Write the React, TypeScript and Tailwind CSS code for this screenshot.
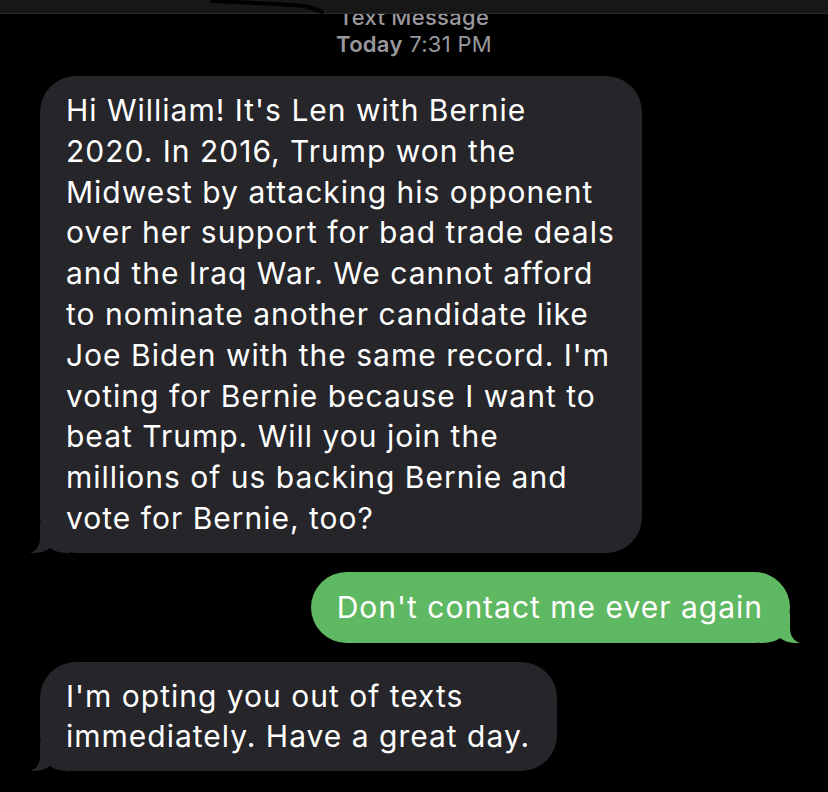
import React from 'react';

const font = { fontFamily: 'Inter, "Liberation Sans", sans-serif' };

type Side = 'left' | 'right';

const Tail: React.FC<{ side: Side; color: string }> = ({ side, color }) => (
  <svg
    width="40"
    height="30"
    viewBox="0 0 40 30"
    className={`absolute bottom-0 ${side === 'left' ? '-left-[10px]' : '-right-[10px] -scale-x-100'}`}
  >
    <path
      d="M10 0 L10 15 C10 23 6 28 0 30 C9 30.5 15 28.5 20 25 C24 28 30 30 40 30 L40 0 Z"
      fill={color}
    />
  </svg>
);

const Bubble: React.FC<{ side: Side; lines: string[] }> = ({ side, lines }) => {
  const isMe = side === 'right';
  const color = isMe ? '#5fb862' : '#262529';
  return (
    <div className={`flex ${isMe ? 'justify-end pr-[38px]' : 'justify-start pl-[40px]'}`}>
      <div
        className={`relative rounded-[36px] pl-[26px] pr-[27px] text-white text-[30px] leading-[40.8px] tracking-[1px] ${
          isMe ? 'bg-[#5fb862] py-[15px]' : 'bg-[#262529] py-[14px]'
        }`}
      >
        <Tail side={side} color={color} />
        <div className="relative">
          {lines.map((l, i) => (
            <div key={i} className="whitespace-nowrap">
              {l}
            </div>
          ))}
        </div>
      </div>
    </div>
  );
};

export default function App() {
  return (
    <div className="w-[828px] h-[792px] bg-black overflow-hidden" style={font}>
      {/* top bar */}
      <div className="relative z-10 h-[14px] bg-[#171717] border-b border-[#2c2c2c]">
        <svg width="828" height="16" className="absolute left-0 top-0">
          <path d="M212 1 C250 3 290 4 304 6 C312 8 318 10 322 12" stroke="#000" strokeWidth="4" fill="none" strokeLinecap="round" />
        </svg>
      </div>

      {/* timestamp */}
      <div className="-mt-[10px] text-center text-[#98989d] text-[22px] leading-[27px] tracking-[0.3px]">
        <div className="font-medium">Text Message</div>
        <div>
          <span className="font-semibold">Today</span> 7:31 PM
        </div>
      </div>

      <div className="mt-[18px] flex flex-col gap-[19px]">
        <Bubble
          side="left"
          lines={[
            "Hi William! It's Len with Bernie",
            '2020. In 2016, Trump won the',
            'Midwest by attacking his opponent',
            'over her support for bad trade deals',
            'and the Iraq War. We cannot afford',
            'to nominate another candidate like',
            "Joe Biden with the same record. I'm",
            'voting for Bernie because I want to',
            'beat Trump. Will you join the',
            'millions of us backing Bernie and',
            'vote for Bernie, too?',
          ]}
        />
        <Bubble side="right" lines={["Don't contact me ever again"]} />
        <Bubble side="left" lines={["I'm opting you out of texts", 'immediately. Have a great day.']} />
      </div>
    </div>
  );
}
